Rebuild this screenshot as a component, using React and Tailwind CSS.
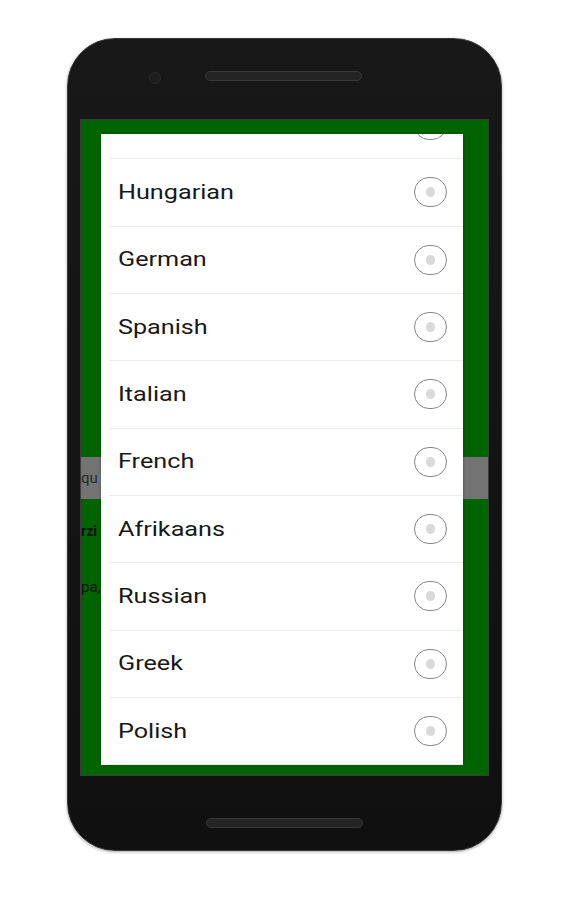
const languages = [
  "",
  "Hungarian",
  "German",
  "Spanish",
  "Italian",
  "French",
  "Afrikaans",
  "Russian",
  "Greek",
  "Polish",
];

function Radio() {
  return (
    <div className="w-[33px] h-[30px] rounded-full border-[1.6px] border-[#858585] flex items-center justify-center">
      <div className="w-[9px] h-[10px] rounded-full bg-[#d9d9d9]" />
    </div>
  );
}

function LanguageRow({ name }) {
  return (
    <div className="flex flex-col">
      <div className="h-[66.33px] flex items-center justify-between pl-[17px] pr-[16px]">
        <span className="inline-block origin-left scale-x-[1.2] text-[21px] leading-none text-[#181818] font-['Roboto',sans-serif]">
          {name}
        </span>
        <Radio />
      </div>
      <div className="h-px ml-[8px] bg-[#ececec]" />
    </div>
  );
}

export default function App() {
  return (
    <div className="w-[563px] h-[900px] bg-white pt-[38px] pl-[67px] font-['Roboto',sans-serif]">
      <div className="w-[435px] h-[813px] rounded-[48px] bg-gradient-to-b from-[#181818] to-[#101010] border border-[#383838] shadow-[0_1px_3px_rgba(0,0,0,0.35)] flex flex-col">
        {/* top bezel */}
        <div className="h-[80px] flex items-start pt-[32px] pl-[81px]">
          <div className="w-[12px] h-[12px] rounded-full bg-[#1c1c1c] border border-[#2c2c2c] mt-[1px]" />
          <div className="ml-[44px] w-[157px] h-[10px] rounded-full bg-[#242424] border border-[#383838]" />
        </div>

        {/* screen */}
        <div className="mx-[12px] h-[657px] relative overflow-hidden bg-[#006400] border border-[#3c3c3c]">
          <div className="pt-[337px] flex flex-col">
            <div className="h-[42px] bg-[#737373] flex items-center">
              <div className="w-[20px] overflow-hidden whitespace-nowrap">
                <span className="text-[15px] text-[#2a2a2a]">qu</span>
              </div>
            </div>
            <div className="h-[44px] flex items-end">
              <div className="w-[20px] overflow-hidden whitespace-nowrap">
                <span className="text-[14px] font-bold text-[#111]">rzi</span>
              </div>
            </div>
            <div className="h-[56px] flex items-end">
              <div className="w-[20px] overflow-hidden whitespace-nowrap">
                <span className="text-[15px] text-[#111]">pa,</span>
              </div>
            </div>
          </div>

          {/* dialog */}
          <div className="absolute left-[20px] top-[14px] w-[362px] h-[631px] bg-white overflow-hidden shadow-[0_0_3px_rgba(0,0,0,0.3)]">
            <div className="-mt-[42px]">
              {languages.map((lang, i) => (
                <LanguageRow key={i} name={lang} />
              ))}
            </div>
          </div>
        </div>

        {/* bottom bezel */}
        <div className="flex-1 flex justify-center pt-[42px]">
          <div className="w-[157px] h-[10px] rounded-full bg-[#242424] border border-[#383838]" />
        </div>
      </div>
    </div>
  );
}
